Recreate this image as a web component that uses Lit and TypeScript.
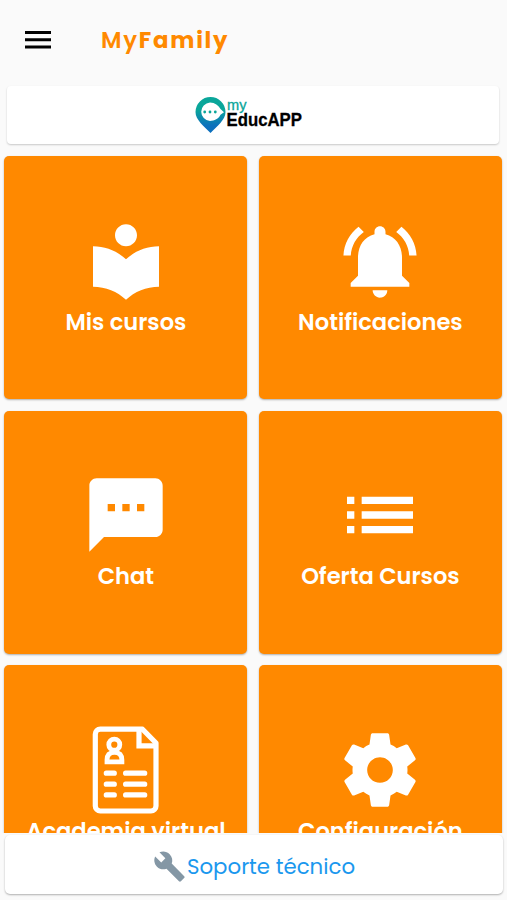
import { LitElement, html, css, svg } from "lit";
import { customElement, property } from "lit/decorators.js";

const icons: Record<string, unknown> = {
  book: svg`<path d="M12 11.55C9.64 9.35 6.48 8 3 8v11c3.48 0 6.64 1.35 9 3.55 2.36-2.19 5.52-3.55 9-3.55V8c-3.48 0-6.64 1.35-9 3.55zM12 8c1.66 0 3-1.34 3-3s-1.34-3-3-3-3 1.34-3 3 1.34 3 3 3z"/>`,
  bell: svg`<path d="M7.58 4.08L6.15 2.65C3.75 4.48 2.17 7.3 2.03 10.5h2c.15-2.65 1.51-4.97 3.55-6.42zm12.39 6.42h2c-.15-3.2-1.73-6.02-4.12-7.85l-1.42 1.43c2.02 1.45 3.39 3.77 3.54 6.42zM18 11c0-3.07-1.64-5.64-4.5-6.32V4c0-.83-.67-1.5-1.5-1.5s-1.5.67-1.5 1.5v.68C7.63 5.36 6 7.92 6 11v5l-2 2v1h16v-1l-2-2v-5zm-6 11c.14 0 .27-.01.4-.04.65-.14 1.18-.58 1.44-1.18.1-.24.15-.5.15-.78h-4c.01 1.1.9 2 2.01 2z"/>`,
  chat: svg`<path d="M20 2H4c-1.1 0-1.99.9-1.99 2L2 22l4-4h14c1.1 0 2-.9 2-2V4c0-1.1-.9-2-2-2zM9 11H7V9h2v2zm4 0h-2V9h2v2zm4 0h-2V9h2v2z"/>`,
  list: svg`<path d="M3 13h2v-2H3v2zm0 4h2v-2H3v2zm0-8h2V7H3v2zm4 4h14v-2H7v2zm0 4h14v-2H7v2zM7 7v2h14V7H7z"/>`,
  gear: svg`<path d="M19.43 12.98c.04-.32.07-.64.07-.98s-.03-.66-.07-.98l2.11-1.65c.19-.15.24-.42.12-.64l-2-3.46c-.12-.22-.39-.3-.61-.22l-2.49 1c-.52-.4-1.08-.73-1.69-.98l-.38-2.65C14.46 2.18 14.25 2 14 2h-4c-.25 0-.46.18-.49.42l-.38 2.65c-.61.25-1.17.59-1.69.98l-2.49-1c-.23-.09-.49 0-.61.22l-2 3.46c-.13.22-.07.49.12.64l2.11 1.65c-.04.32-.07.65-.07.98s.03.66.07.98l-2.11 1.65c-.19.15-.24.42-.12.64l2 3.46c.12.22.39.3.61.22l2.49-1c.52.4 1.08.73 1.69.98l.38 2.65c.03.24.24.42.49.42h4c.25 0 .46-.18.49-.42l.38-2.65c.61-.25 1.17-.59 1.69-.98l2.49 1c.23.09.49 0 .61-.22l2-3.46c.12-.22.07-.49-.12-.64l-2.11-1.65zM12 15.5c-1.93 0-3.5-1.57-3.5-3.5s1.57-3.5 3.5-3.5 3.5 1.57 3.5 3.5-1.57 3.5-3.5 3.5z"/>`,
  resume: svg`<g transform="scale(.27273)" fill="none" stroke="#fff" stroke-width="5.2" stroke-linejoin="round" stroke-linecap="round">
    <path d="M18.300 3.200H60.500L74 17V80a5 5 0 0 1-5 5H18.300a5 5 0 0 1-5-5V8.200a5 5 0 0 1 5-5z"/>
    <path d="M57 5V19.800H73" stroke-linejoin="miter"/>
    <circle cx="32.300" cy="18.700" r="5.500" stroke-width="4.800"/>
    <path d="M25 35.800V34C25 28.500 28 26.300 32.400 26.300S39.900 28.500 39.900 34V35.800z" stroke-width="4.800" stroke-linejoin="miter"/>
    <path d="M24.300 47.200h8M43.600 47.200H62.700M24.300 58.200h8M43.600 58.200H62.700M24.300 68.900h8M43.600 68.900H62.700"/>
  </g>`,
};

@customElement("menu-tile")
export class MenuTile extends LitElement {
  @property() icon = "";
  @property() label = "";

  static styles = css`
    :host {
      display: flex;
      flex-direction: column;
      align-items: center;
      justify-content: center;
      height: 243px;
      box-sizing: border-box;
      border-radius: 5px;
      background: #ff8900;
      box-shadow: 0 1px 2px rgba(0, 0, 0, 0.3);
      color: #fff;
    }
    .icon {
      width: 88px;
      height: 88px;
      fill: currentColor;
    }
    .label {
      height: 34px;
      font-size: 22.6px;
      font-weight: 600;
      line-height: 34px;
      white-space: nowrap;
    }
  `;

  render() {
    return html`<svg class="icon" viewBox="0 0 24 24">${icons[this.icon]}</svg>
      <div class="label">${this.label}</div>`;
  }
}

@customElement("app-root")
export class AppRoot extends LitElement {
  private tiles = [
    ["book", "Mis cursos"],
    ["bell", "Notificaciones"],
    ["chat", "Chat"],
    ["list", "Oferta Cursos"],
    ["resume", "Academia virtual"],
    ["gear", "Configuración"],
  ];

  static styles = css`
    :host {
      display: flex;
      flex-direction: column;
      height: 900px;
      overflow: hidden;
      background: #fafafa;
      font-family: Poppins, Inter, "Open Sans", sans-serif;
    }
    .bar {
      display: flex;
      align-items: center;
      flex: none;
      height: 80px;
      padding-left: 25px;
    }
    .menu {
      width: 26px;
      height: 18px;
    }
    .title {
      margin: 0 0 1px 50px;
      color: #ff8900;
      font-size: 22.8px;
      font-weight: 700;
      letter-spacing: 1.75px;
    }
    .light {
      font-weight: 600;
    }
    .brand {
      display: flex;
      align-items: center;
      justify-content: center;
      flex: none;
      height: 58px;
      margin: 6px 8px 0 7px;
      padding-right: 8px;
      box-sizing: border-box;
      border-radius: 4px;
      background: #fff;
      box-shadow: 0 1px 2px rgba(0, 0, 0, 0.2);
    }
    .logo {
      width: 108px;
      height: 38px;
    }
    .grid {
      display: grid;
      grid-template-columns: 243px 243px;
      grid-auto-rows: 243px;
      gap: 11.5px;
      flex: 1;
      min-height: 0;
      overflow: hidden;
      padding: 12px 4.4px 0;
    }
    .support {
      display: flex;
      align-items: center;
      justify-content: center;
      flex: none;
      gap: 1px;
      height: 59px;
      margin: 2px 4px 6px 5px;
      padding-top: 3px;
      box-sizing: border-box;
      border-radius: 5px;
      background: #fff;
      box-shadow: 0 1px 2px rgba(0, 0, 0, 0.3);
      color: #1b98ee;
      font-size: 21.3px;
    }
    .wrench {
      width: 33px;
      height: 33px;
    }
  `;

  render() {
    return html`
      <header class="bar">
        <svg class="menu" viewBox="0 0 26 18"><path d="M0 0h26v3H0zM0 7.300h26v3H0zM0 14.600h26v3H0z" /></svg>
        <h1 class="title"><span class="light">My</span>Family</h1>
      </header>
      <section class="brand">
        <svg class="logo" viewBox="0 0 108 38">
          <defs>
            <linearGradient id="pin" x1="0" y1="0" x2="0" y2="1">
              <stop offset=".35" stop-color="#0aa69a" />
              <stop offset=".8" stop-color="#0d70bd" />
            </linearGradient>
          </defs>
          <path fill="url(#pin)" d="M15.500 1A15 15 0 0 1 30.500 16C30.500 24 22 30 15.500 37 9 30 .5 24 .5 16A15 15 0 0 1 15.500 1z" />
          <path fill="#fff" d="M15 6.500c5 0 8.500 3 10.500 6.500l3.500 3.300-3.500 2.500c-2 4-6 6.200-10.500 6.200a9.800 9.300 0 0 1 0-18.500z" />
          <g fill="#0aa69a"><circle cx="9.700" cy="16" r="1.400" /><circle cx="15" cy="16" r="1.400" /><circle cx="20.300" cy="16" r="1.400" /></g>
          <text x="32" y="14" font-family="Liberation Sans" font-size="14.500" fill="#0aa69a" stroke="#0aa69a" stroke-width=".3" textLength="19.500" lengthAdjust="spacingAndGlyphs">my</text>
          <text x="31.500" y="29.500" font-family="Liberation Sans" font-weight="700" font-size="18" stroke="#000" stroke-width=".3" textLength="75.500" lengthAdjust="spacingAndGlyphs">EducAPP</text>
        </svg>
      </section>
      <main class="grid">
        ${this.tiles.map(([icon, label]) => html`<menu-tile icon=${icon} label=${label}></menu-tile>`)}
      </main>
      <footer class="support">
        <svg class="wrench" viewBox="0 0 24 24" fill="#8497a5">
          <path d="M22.700 19l-9.100-9.100c.9-2.300.4-5-1.500-6.900-2-2-5-2.400-7.400-1.300L9 6 6 9 1.600 4.700C.4 7.100.9 10.100 2.900 12.100c1.900 1.900 4.600 2.400 6.900 1.500l9.100 9.100c.4.400 1 .4 1.400 0l2.300-2.300c.5-.4.5-1.100.1-1.400z" />
        </svg>
        <span>Soporte técnico</span>
      </footer>
    `;
  }
}
